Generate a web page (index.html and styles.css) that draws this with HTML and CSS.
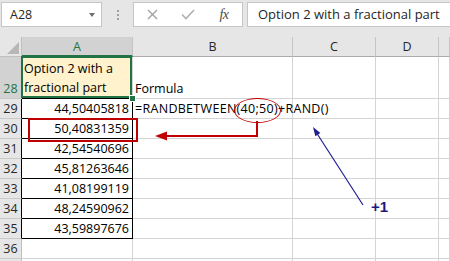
FILE: index.html
```html
<!DOCTYPE html>
<html lang="en">
<head>
    <meta charset="UTF-8">
    <title>RANDBETWEEN + RAND</title>
    <link rel="stylesheet" href="styles.css">
</head>
<body>
    <div class="formula-bar">
        <div class="name-box">
            <span>A28</span>
            <span class="drop"></span>
        </div>
        <div class="grip"><i></i><i></i><i></i></div>
        <div class="fx-box">
            <span class="slot">
                <svg width="11" height="11" viewBox="0 0 11 11"><path d="M1 1L10 10M10 1L1 10" stroke="#a0a0a0" stroke-width="1.4" fill="none"/></svg>
            </span>
            <span class="slot">
                <svg width="14" height="11" viewBox="0 0 14 11"><path d="M1 5.5L5 9.5L13 1" stroke="#b0b0b0" stroke-width="1.6" fill="none"/></svg>
            </span>
            <span class="slot fx">fx</span>
        </div>
        <div class="formula-input">Option 2 with a fractional part</div>
    </div>

    <div class="sheet">
        <!-- column headers -->
        <div class="corner"></div>
        <div class="hd active">A</div>
        <div class="hd">B</div>
        <div class="hd">C</div>
        <div class="hd">D</div>
        <div class="hd"></div>

        <!-- row 28 -->
        <div class="rh active">28</div>
        <div class="c sel">Option 2 with a<br>fractional part</div>
        <div class="c">Formula</div>
        <div class="c"></div>
        <div class="c"></div>
        <div class="c"></div>

        <div class="rh boxed">29</div>
        <div class="c num boxed">44,50405818</div>
        <div class="c formula">=RANDBETWEEN<span class="circled">(40;50)</span>+RAND()</div>
        <div class="c"></div>
        <div class="c"></div>
        <div class="c"></div>

        <div class="rh boxed">30</div>
        <div class="c num boxed">50,40831359</div>
        <div class="c"></div>
        <div class="c"></div>
        <div class="c"></div>
        <div class="c"></div>

        <div class="rh boxed">31</div>
        <div class="c num boxed">42,54540696</div>
        <div class="c"></div>
        <div class="c"></div>
        <div class="c"></div>
        <div class="c"></div>

        <div class="rh boxed">32</div>
        <div class="c num boxed">45,81263646</div>
        <div class="c"></div>
        <div class="c"></div>
        <div class="c"></div>
        <div class="c"></div>

        <div class="rh boxed">33</div>
        <div class="c num boxed">41,08199119</div>
        <div class="c"></div>
        <div class="c"></div>
        <div class="c"></div>
        <div class="c"></div>

        <div class="rh boxed">34</div>
        <div class="c num boxed">48,24590962</div>
        <div class="c"></div>
        <div class="c"></div>
        <div class="c"></div>
        <div class="c"></div>

        <div class="rh boxed">35</div>
        <div class="c num boxed">43,59897676</div>
        <div class="c"></div>
        <div class="c"></div>
        <div class="c"></div>
        <div class="c"></div>

        <div class="rh">36</div>
        <div class="c"></div>
        <div class="c"></div>
        <div class="c"></div>
        <div class="c"></div>
        <div class="c"></div>

        <div class="rh"></div>
        <div class="c"></div>
        <div class="c"></div>
        <div class="c"></div>
        <div class="c"></div>
        <div class="c"></div>
    </div>

    <!-- annotations drawn over the sheet -->
    <svg class="notes" width="450" height="261" viewBox="0 0 450 261">
        <rect x="29" y="119" width="108" height="22" fill="none" stroke="#c00000" stroke-width="2"/>
        <path d="M257 121V136H165" fill="none" stroke="#c00000" stroke-width="2"/>
        <polygon points="155,136 167,131.5 167,140.5" fill="#c00000"/>
        <line x1="363" y1="205" x2="316" y2="132" stroke="#202090" stroke-width="1.2"/>
        <polygon points="313,127 320.4,133 315.3,136.2" fill="#202090"/>
    </svg>
    <span class="plus-one">+1</span>
</body>
</html>
```

FILE: styles.css
```css
body {
    margin: 0;
    width: 450px;
    height: 261px;
    overflow: hidden;
    background: #fff;
    font-family: "Open Sans", "Liberation Sans", sans-serif;
    position: relative;
}

/* formula bar */
.formula-bar {
    height: 37px;
    background: #e6e6e6;
    display: flex;
    align-items: flex-start;
    padding-top: 2px;
    box-sizing: border-box;
}
.name-box {
    margin-left: 1px;
    width: 101px;
    height: 25px;
    box-sizing: border-box;
    background: #fff;
    border: 1px solid #c6c6c6;
    display: flex;
    align-items: center;
    justify-content: space-between;
    padding: 0 6px 0 8px;
    font-size: 12.5px;
    color: #262626;
}
.drop {
    width: 0;
    height: 0;
    border-left: 3.5px solid transparent;
    border-right: 3.5px solid transparent;
    border-top: 4px solid #6d6d6d;
}
.grip {
    width: 31px;
    display: flex;
    flex-direction: column;
    align-items: center;
    gap: 2px;
    padding-top: 8px;
}
.grip i {
    width: 2px;
    height: 2px;
    background: #a0a0a0;
}
.fx-box {
    width: 110px;
    height: 25px;
    box-sizing: border-box;
    background: #fff;
    border: 1px solid #c6c6c6;
    display: flex;
    align-items: center;
}
.slot {
    width: 36px;
    display: flex;
    justify-content: center;
}
.fx {
    font-family: "Liberation Serif", serif;
    font-style: italic;
    font-size: 14px;
    color: #4a4a4a;
    letter-spacing: -0.5px;
}
.formula-input {
    flex: 1;
    margin-left: 4px;
    margin-right: -2px;
    height: 25px;
    box-sizing: border-box;
    background: #fff;
    border: 1px solid #c6c6c6;
    padding-left: 10px;
    font-size: 13px;
    line-height: 23px;
    color: #262626;
    white-space: nowrap;
}

/* sheet grid */
.sheet {
    display: grid;
    grid-template-columns: 22px 111px 160px 83px 63px 1fr;
    grid-template-rows: 20px 42px repeat(9, 20px);
    font-size: 12.5px;
    line-height: 19px;
    color: #000;
}
.sheet > div {
    box-sizing: border-box;
    border-right: 1px solid #d4d4d4;
    border-bottom: 1px solid #d4d4d4;
}
.corner {
    background: #e6e6e6;
    position: relative;
    border-color: #bfbfbf !important;
}
.corner::after {
    content: "";
    position: absolute;
    right: 2px;
    bottom: 2px;
    border-left: 12px solid transparent;
    border-bottom: 12px solid #b7b7b7;
}
.hd {
    background: #e6e6e6;
    border-right-color: #c4c4c4 !important;
    border-bottom-color: #ababab !important;
    text-align: center;
    color: #262626;
}
.hd.active {
    background: #d2d2d2;
    color: #217346;
    border-bottom: 2px solid #217346 !important;
}
.rh {
    background: #e6e6e6;
    border-right-color: #bfbfbf !important;
    border-bottom-color: #c9c9c9 !important;
    color: #262626;
    display: flex;
    align-items: flex-end;
    justify-content: center;
}
.rh.active {
    background: #d2d2d2;
    color: #217346;
}
.rh.boxed {
    border-right-color: #000 !important;
}
.c {
    display: flex;
    align-items: flex-end;
    padding: 0 3px 0 2px;
    white-space: nowrap;
}
.c.formula {
    letter-spacing: 0.3px;
}
.c.sel {
    display: block;
    padding-top: 2px;
    background: #fff2cc;
    position: relative;
    border-bottom-color: #000;
}
.c.sel::after {
    content: "";
    position: absolute;
    top: -1px;
    left: -1px;
    right: 0;
    bottom: 0;
    border: 2px solid #217346;
}
.c.sel::before {
    content: "";
    position: absolute;
    right: -4px;
    bottom: -4px;
    width: 5px;
    height: 5px;
    background: #217346;
    border: 1px solid #fff;
    z-index: 1;
}
.c.num {
    justify-content: flex-end;
}
.c.boxed {
    border-right-color: #000;
    border-bottom-color: #000;
}
.circled {
    position: relative;
}
.circled::after {
    content: "";
    position: absolute;
    left: -3px;
    right: -3px;
    top: -1px;
    bottom: -5px;
    border: 1px solid #c00000;
    border-radius: 50%;
}

/* annotations */
.notes {
    position: absolute;
    top: 0;
    left: 0;
    pointer-events: none;
}
.plus-one {
    position: absolute;
    left: 371px;
    top: 199px;
    font-family: "Liberation Sans", sans-serif;
    font-weight: bold;
    font-size: 15px;
    line-height: 15px;
    color: #1a1a80;
}
```
